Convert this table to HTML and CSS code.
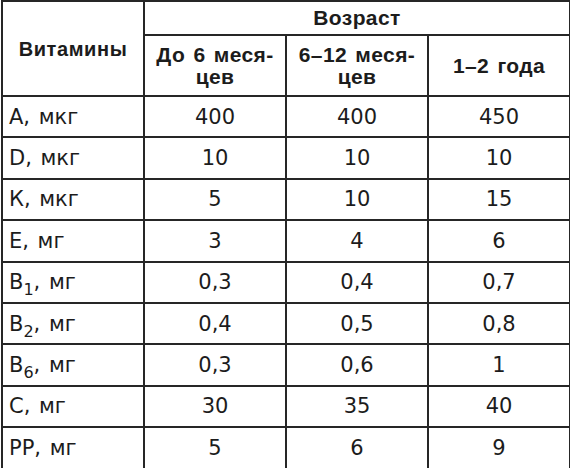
FILE: index.html
```html
<!DOCTYPE html>
<html lang="ru">
<head>
<meta charset="utf-8">
<title>Витамины</title>
<link rel="stylesheet" href="styles.css">
</head>
<body>
<table class="vit">
  <colgroup>
    <col class="c1"><col class="c2"><col class="c3"><col class="c4">
  </colgroup>
  <thead>
    <tr class="h1">
      <th rowspan="2" class="name-h">Витамины</th>
      <th colspan="3">Возраст</th>
    </tr>
    <tr class="h2">
      <th>До 6 меся-<br>цев</th>
      <th>6–12 меся-<br>цев</th>
      <th>1–2 года</th>
    </tr>
  </thead>
  <tbody>
    <tr><td class="name">A, мкг</td><td>400</td><td>400</td><td>450</td></tr>
    <tr><td class="name">D, мкг</td><td>10</td><td>10</td><td>10</td></tr>
    <tr><td class="name">К, мкг</td><td>5</td><td>10</td><td>15</td></tr>
    <tr><td class="name">Е, мг</td><td>3</td><td>4</td><td>6</td></tr>
    <tr><td class="name">B<sub>1</sub>, мг</td><td>0,3</td><td>0,4</td><td>0,7</td></tr>
    <tr><td class="name">B<sub>2</sub>, мг</td><td>0,4</td><td>0,5</td><td>0,8</td></tr>
    <tr><td class="name">B<sub>6</sub>, мг</td><td>0,3</td><td>0,6</td><td>1</td></tr>
    <tr><td class="name">C, мг</td><td>30</td><td>35</td><td>40</td></tr>
    <tr><td class="name">PP, мг</td><td>5</td><td>6</td><td>9</td></tr>
  </tbody>
</table>
</body>
</html>
```
FILE: styles.css
```css
html, body {
  margin: 0;
  padding: 0;
  background: #fff;
}
body {
  font-family: "DejaVu Sans", "Liberation Sans", sans-serif;
  color: #1c1c1c;
}
.vit {
  border-collapse: collapse;
  table-layout: fixed;
  width: 568px;
  margin: 0 0 0 1px;
  font-size: 21px;
  line-height: 22px;
}
.c1 { width: 142px; }
.c2 { width: 142px; }
.c3 { width: 142px; }
.c4 { width: 142px; }
.vit th, .vit td {
  border: 2px solid #262626;
  padding: 0;
  text-align: center;
  vertical-align: middle;
}
.vit th {
  font-family: "Liberation Sans", Arial, sans-serif;
  font-weight: 700;
  font-size: 21px;
  line-height: 22px;
  letter-spacing: 0.4px;
  word-spacing: 2px;
}
.vit th.name-h {
  font-size: 20px;
  letter-spacing: 0.6px;
}
.h1 { height: 34px; }
.h2 { height: 61px; }
.vit tbody tr { height: 41.4px; }
.vit td.name {
  text-align: left;
  padding-left: 6px;
  word-spacing: 2px;
}
.vit sub {
  font-size: 16px;
  line-height: 0;
  vertical-align: -6px;
}
```
